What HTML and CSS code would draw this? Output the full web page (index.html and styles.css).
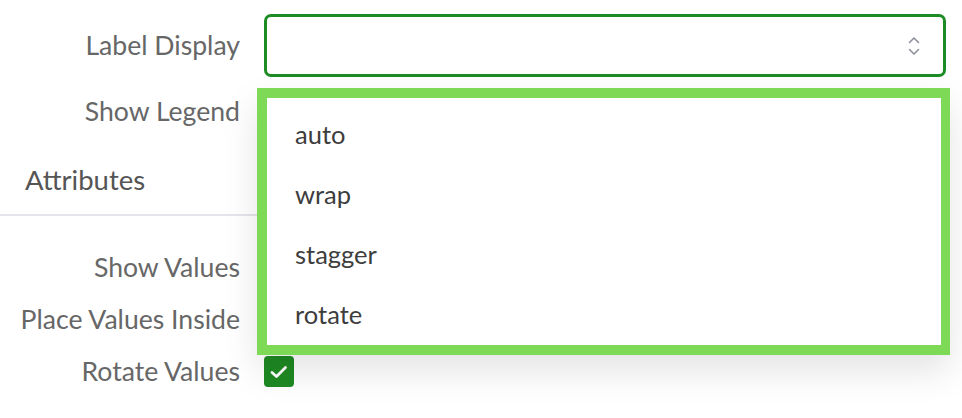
FILE: index.html
```html
<!DOCTYPE html>
<html>
<head>
<meta charset="utf-8">
<link rel="stylesheet" href="styles.css">
</head>
<body>
<div class="panel">
  <div class="row row-select">
    <div class="label">Label Display</div>
    <div class="control">
      <div class="select">
        <svg class="chev" width="12" height="20" viewBox="0 0 12 20"><path d="M1.5 6.5 L6 2 L10.5 6.5 M1.5 13.5 L6 18 L10.5 13.5" fill="none" stroke="#8b9099" stroke-width="1.6" stroke-linecap="round" stroke-linejoin="round"/></svg>
      </div>
      <div class="dropdown">
        <div class="option">auto</div>
        <div class="option">wrap</div>
        <div class="option">stagger</div>
        <div class="option">rotate</div>
      </div>
    </div>
  </div>
  <div class="row row-legend">
    <div class="label">Show Legend</div>
    <div class="control"><span class="checkbox"></span></div>
  </div>
  <div class="section">
    <div class="section-title">Attributes</div>
  </div>
  <div class="row row-check first">
    <div class="label">Show Values</div>
    <div class="control"><span class="checkbox"></span></div>
  </div>
  <div class="row row-check">
    <div class="label">Place Values Inside</div>
    <div class="control"><span class="checkbox"></span></div>
  </div>
  <div class="row row-check">
    <div class="label">Rotate Values</div>
    <div class="control">
      <span class="checkbox checked">
        <svg width="20" height="20" viewBox="0 0 20 20"><path d="M3 10.5 L7.5 14.5 L16.5 5.5" fill="none" stroke="#fff" stroke-width="2.8" stroke-linecap="round" stroke-linejoin="round"/></svg>
      </span>
    </div>
  </div>
</div>
</body>
</html>
```

FILE: styles.css
```css
html, body {
  margin: 0;
  padding: 0;
  background: #fff;
}
body {
  font-family: Lato, "Open Sans", sans-serif;
  width: 962px;
  height: 418px;
  overflow: hidden;
}
.panel {
  padding-top: 14px;
}
.row {
  display: grid;
  grid-template-columns: 240px 682px;
  column-gap: 24px;
  align-items: center;
}
.label {
  text-align: right;
  font-size: 26.6px;
  color: #676767;
  line-height: 31px;
  white-space: nowrap;
}
.control {
  position: relative;
  display: flex;
  align-items: center;
}
.row-select {
  height: 63px;
}
.select {
  box-sizing: border-box;
  width: 682px;
  height: 63px;
  border: 3px solid #1e8c24;
  border-radius: 7px;
  display: flex;
  align-items: center;
  justify-content: flex-end;
  padding-right: 23px;
}
.chev {
  display: block;
}
.dropdown {
  position: absolute;
  left: -7px;
  top: 74px;
  box-sizing: border-box;
  width: 693px;
  height: 267px;
  border: 10px solid #7ed957;
  border-right-width: 9px;
  background: #fff;
  box-shadow: 0 16px 34px rgba(0, 0, 0, 0.11);
  z-index: 2;
  padding-top: 21px;
}
.option {
  height: 60px;
  line-height: 30px;
  padding-left: 28px;
  font-size: 25.5px;
  color: #3d3d3d;
}
.row-legend {
  margin-top: 19px;
  height: 31px;
}
.checkbox {
  display: inline-flex;
  align-items: center;
  justify-content: center;
  width: 30px;
  height: 31px;
  box-sizing: border-box;
  border-radius: 4px;
  border: 2px solid #c8c8c8;
}
.checkbox.checked {
  background: #1e8a22;
  border-color: #1e8a22;
}
.section {
  margin-top: 35px;
  border-bottom: 2px solid #e4e4ea;
  padding: 0 0 16px 25px;
  width: 258px;
  box-sizing: border-box;
}
.section-title {
  font-size: 27.5px;
  color: #555;
  line-height: 36px;
}
.row-check {
  height: 31px;
  margin-top: 21px;
}
.row-check.first {
  margin-top: 36px;
}
```
